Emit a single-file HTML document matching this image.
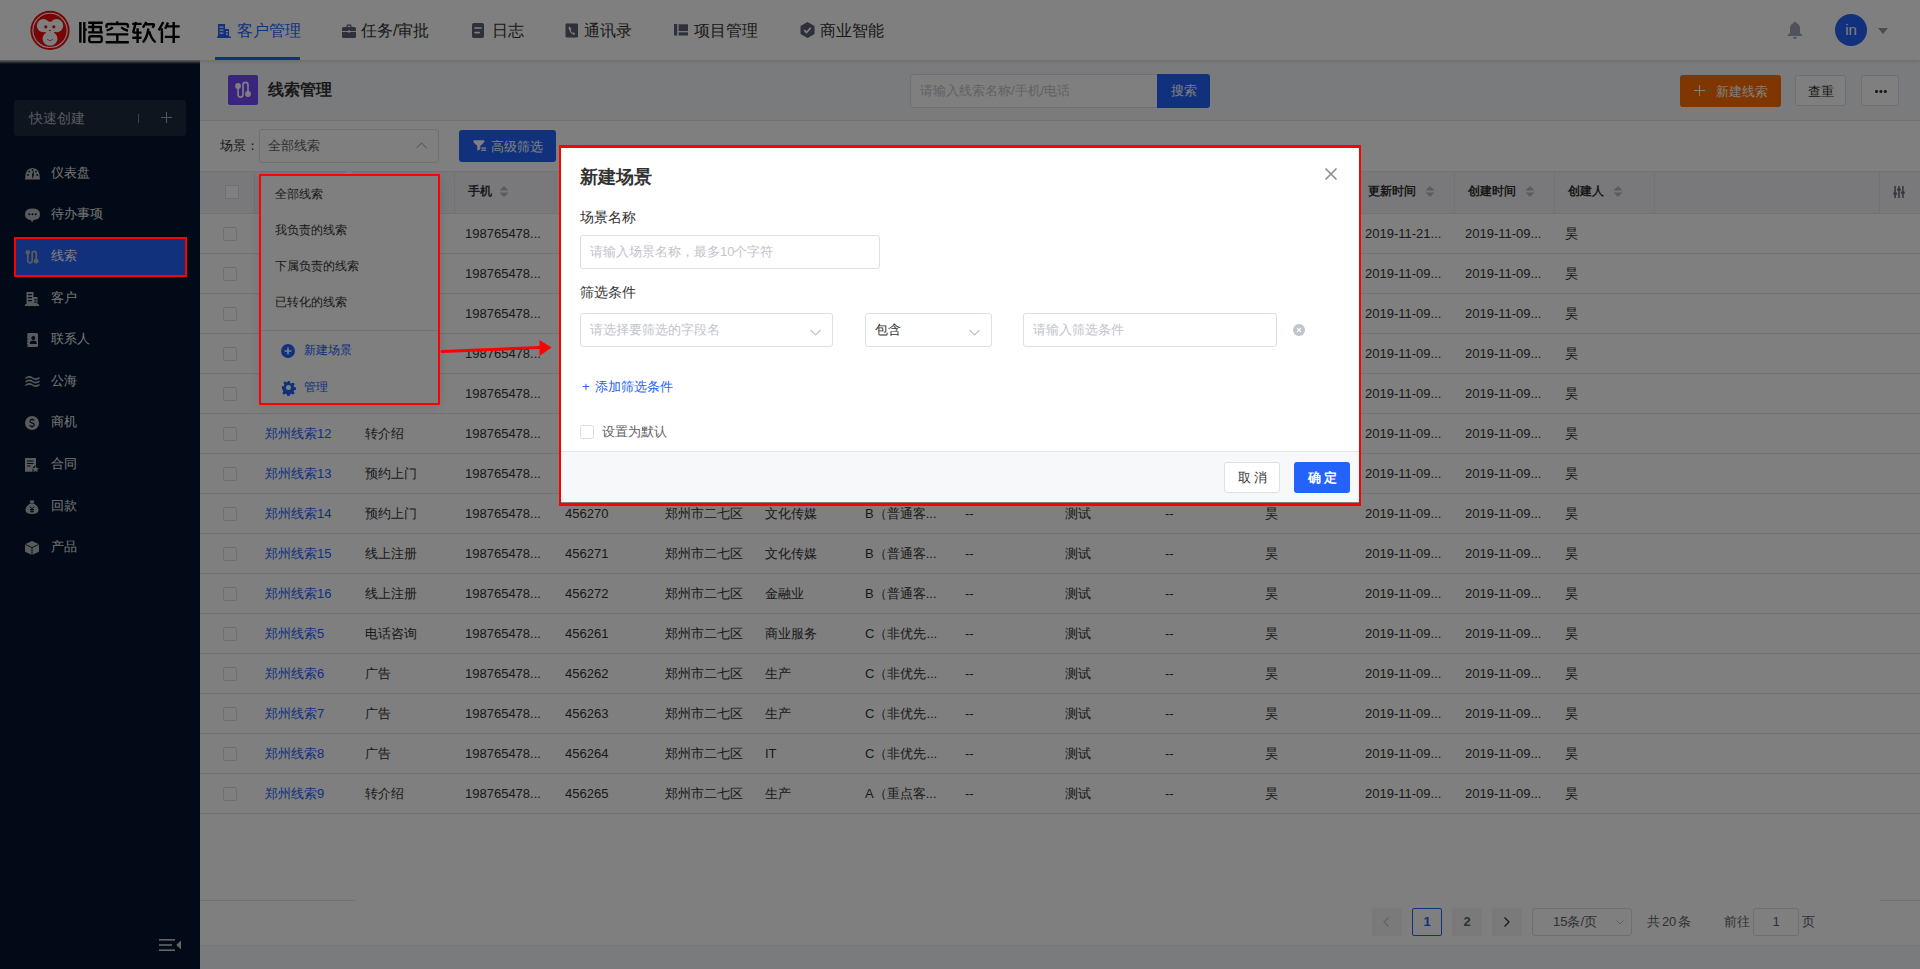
<!DOCTYPE html>
<html><head><meta charset="utf-8">
<style>
*{box-sizing:border-box;margin:0;padding:0}
html,body{width:1920px;height:969px;overflow:hidden;font-family:"Liberation Sans",sans-serif;color:#333;background:#f5f6f9;position:relative}
.abs{position:absolute}
svg{position:absolute;overflow:visible}
.hd{position:absolute;left:0;top:0;width:1920px;height:60px;background:#fff;box-shadow:0 1px 4px rgba(0,0,0,.15);z-index:3}
.nav{position:absolute;top:1px;height:60px;font-size:16px;line-height:60px;color:#333;white-space:nowrap}
.side{position:absolute;left:0;top:60px;width:200px;height:909px;background:#03152c;z-index:2}
.mi{position:absolute;left:51px;font-size:13px;color:#e6e8eb;line-height:20px;white-space:nowrap}
.content{position:absolute;left:200px;top:60px;width:1720px;height:909px;background:#f5f6f9}
.row{position:absolute;left:200px;width:1720px;height:40px;background:#fff;border-bottom:1px solid #e6e6e6;font-size:13px;line-height:40px;color:#333}
.c{position:absolute;top:0;white-space:nowrap}
.lk{color:#2362fb}
.cb{position:absolute;width:14px;height:14px;border:1px solid #dcdfe6;border-radius:2px;background:#fff}
.th{position:absolute;top:-2px;font-size:12px;font-weight:bold;color:#333;line-height:42px;white-space:nowrap}
.vd{position:absolute;top:0;width:1px;height:42px;background:#e6e6e6}
.mask{position:absolute;left:0;top:0;width:1920px;height:969px;background:rgba(0,0,0,.5);z-index:10}
.modal{position:absolute;left:561px;top:148px;width:798px;height:354px;background:#fff;z-index:20}
.red{position:absolute;border:2px solid #ff0000;z-index:30}
.inp{position:absolute;border:1px solid #dcdfe6;border-radius:3px;background:#fff;font-size:13px;color:#c0c4cc;line-height:32px;padding-left:9px;white-space:nowrap}
.btn{position:absolute;border-radius:3px;font-size:13px;text-align:center;white-space:nowrap}
.dd{position:absolute;left:12px;font-size:12px;color:#333;line-height:20px;white-space:nowrap}
.pg{position:absolute;top:908px;height:28px;background:#f4f4f5;border-radius:2px;font-size:13px;font-weight:bold;color:#606266;text-align:center;line-height:28px}
</style></head><body>

<!-- ============ HEADER ============ -->
<div class="hd">
  <svg style="left:29px;top:10px" width="42" height="42" viewBox="0 0 42 42">
    <circle cx="21" cy="20.4" r="19.6" fill="#ee0c0c"/>
    <circle cx="21" cy="20.4" r="17.1" fill="none" stroke="#fff" stroke-width="1.1"/>
    <circle cx="14.4" cy="15.6" r="6.6" fill="#fff"/>
    <circle cx="27.6" cy="15.6" r="6.6" fill="#fff"/>
    <ellipse cx="21" cy="18" rx="6" ry="6.5" fill="#fff"/>
    <ellipse cx="21" cy="28.8" rx="7.5" ry="7" fill="#fff"/>
    <circle cx="16.8" cy="16.8" r="1.6" fill="#ee0c0c"/>
    <circle cx="24.8" cy="16.8" r="1.6" fill="#ee0c0c"/>
    <ellipse cx="20.9" cy="20.4" rx="0.9" ry="0.6" fill="#ee0c0c"/>
    <path d="M18.2 29.3 Q21 32.2 24 29.3" fill="none" stroke="#ee0c0c" stroke-width="0.7"/>
  </svg>
  <svg style="left:0;top:0" width="200" height="60" viewBox="0 0 200 60"><g fill="none" stroke="#000" stroke-width="2.4" stroke-linecap="butt" stroke-linejoin="round">
<path d="M80.35 22V42.8M84.3 22V43M84.3 29.6H86.8"/>
<path d="M88.2 22.8H102.8M93 22.8V32.4M88.2 27H100.8V32.4M88.2 32.4H102.8"/>
<rect x="89.3" y="36.3" width="12.4" height="5.8" rx="1.8"/>
<path d="M116.2 22.5H118.4"/>
<path d="M106.5 27.8V26.2Q106.5 24 108.7 24H125.8Q128 24 128 26.2V27.8"/>
<path d="M112.8 27.3Q110.5 29.8 106.6 30.4M121.2 27.3Q123.5 29.8 128 30.7"/>
<path d="M106.5 34.4H128.3M117.3 34.4V42.3M105.7 42.3H128.8"/>
<path d="M132.3 23.9H141.6M136 22L133.4 31.6Q133.2 32.6 134.2 32.6H141.6M137.6 28.2V43M132.3 37.8H141.6"/>
<path d="M146.3 22L142.9 27.6M146 24.2H152.8Q154.6 24.2 153.8 25.6L152.5 27.9M148.4 28.5Q147.3 37.5 142.9 42.4M149.2 31.2Q151 38.5 155.6 42.4"/>
<path d="M163.3 22L158.7 30.4M161.9 28.2V43M168 22.6L165.2 28.8M167 26.4H179.7M164.8 36.9H179.7M173.7 22V43"/>
</g></svg>

  <!-- nav -->
  <svg style="left:217px;top:24px" width="14" height="14" viewBox="0 0 14 14"><path d="M1 0h7v13h-7z M8 5h4v8h-4z M0 12.5h14v1.5h-14z" fill="#2362fb"/><path d="M2.5 2.5h4v1.2h-4zM2.5 5.5h4v1.2h-4zM2.5 8.5h4v1.2h-4zM9 7h2v1.2h-2zM9 9.5h2v1.2h-2z" fill="#fff"/></svg>
  <div class="nav" style="left:237px;color:#2362fb">客户管理</div>
  <div class="abs" style="left:215px;top:57px;width:85px;height:3px;background:#2362fb"></div>

  <svg style="left:342px;top:24px" width="14" height="14" viewBox="0 0 14 14"><path d="M4.5 3V1.5Q4.5 0.5 5.5 0.5h3Q9.5 0.5 9.5 1.5V3h-1.2V1.7h-2.6V3z" fill="#5c6075"/><rect x="0" y="3" width="14" height="11" rx="1.5" fill="#5c6075"/><rect x="0" y="7" width="14" height="0.9" fill="#fff"/><circle cx="7" cy="7.5" r="1.2" fill="#fff"/></svg>
  <div class="nav" style="left:361px">任务/审批</div>

  <svg style="left:472px;top:23px" width="12" height="15" viewBox="0 0 12 15"><rect x="0" y="0" width="12" height="15" rx="1.8" fill="#5c6075"/><rect x="2.2" y="4.2" width="7.8" height="1.6" rx=".8" fill="#fff"/><rect x="2.2" y="8.8" width="5.8" height="1.6" rx=".8" fill="#fff"/></svg>
  <div class="nav" style="left:492px">日志</div>

  <svg style="left:565px;top:23px" width="13" height="15" viewBox="0 0 13 15"><rect x="0.5" y="0.5" width="12.5" height="14" rx="1.2" fill="#5c6075"/><path d="M4.2 3.2Q3.2 4 3.8 6.2Q5 10 8.6 11.8Q9.6 12 10.2 11l-1.6-1.8-1.2.8Q6 8.8 5.6 6.6l1-.8z" fill="#fff"/></svg>
  <div class="nav" style="left:584px">通讯录</div>

  <svg style="left:674px;top:24px" width="14" height="12" viewBox="0 0 14 12"><rect x="0" y="0" width="3.2" height="11.5" fill="#5c6075"/><rect x="4.6" y="0.3" width="9.4" height="6.8" fill="#5c6075"/><rect x="4.6" y="8.3" width="9.4" height="3.2" fill="#5c6075"/></svg>
  <div class="nav" style="left:694px">项目管理</div>

  <svg style="left:800px;top:22px" width="15" height="16" viewBox="0 0 15 16"><path d="M7.5 0L14.5 4v8L7.5 16L0.5 12V4z" fill="#5c6075"/><path d="M4.2 8.2l2.3 2.3 4.2-4.6" fill="none" stroke="#fff" stroke-width="1.8"/></svg>
  <div class="nav" style="left:820px">商业智能</div>

  <!-- bell -->
  <svg style="left:1787px;top:21px" width="16" height="18" viewBox="0 0 16 18"><path d="M8 0.5Q9.3 0.5 9.4 2Q13 3 13 7.5V12l2.5 2.5v0.5H0.5v-0.5L3 12V7.5Q3 3 6.6 2Q6.7 0.5 8 0.5z" fill="#9ea6ba"/><path d="M6 16h4Q9.8 18 8 18Q6.2 18 6 16z" fill="#9ea6ba"/></svg>
  <div class="abs" style="left:1835px;top:14px;width:32px;height:32px;border-radius:50%;background:#2362fb;color:#fff;font-size:15px;line-height:32px;text-align:center">in</div>
  <svg style="left:1878px;top:28px" width="10" height="7" viewBox="0 0 10 7"><path d="M0 0h10L5 6z" fill="#999"/></svg>
</div>

<!-- ============ SIDEBAR ============ -->
<div class="side">
  <div class="abs" style="left:0;top:0;width:200px;height:4px;background:linear-gradient(rgba(235,236,240,.9),rgba(3,21,44,0))"></div>
  <div class="abs" style="left:14px;top:40px;width:172px;height:36px;border-radius:3px;background:#1c2a3e"></div>
  <div class="abs" style="left:29px;top:48px;font-size:14px;line-height:20px;color:#b0b4bb">快速创建</div>
  <div class="abs" style="left:138px;top:54px;width:1px;height:9px;background:#7a8290"></div>
  <div class="abs" style="left:160.5px;top:57px;width:11px;height:1px;background:#a8adb5"></div>
  <div class="abs" style="left:165.5px;top:52px;width:1px;height:11px;background:#a8adb5"></div>
  <div class="abs" style="left:14px;top:178px;width:172px;height:38px;border-radius:3px;background:#2362fb"></div>
  <svg style="left:25px;top:108px" width="15" height="12" viewBox="0 0 15 12"><path d="M0 11.5Q0 0 7.5 0Q15 0 15 11.5z" fill="#b4b6ba"/><path d="M7.5 11L7 6.5L8.5 2.5L9 7z" fill="#03152c"/><circle cx="3" cy="7" r="0.9" fill="#03152c"/><circle cx="4.2" cy="3.6" r="0.9" fill="#03152c"/><circle cx="7.5" cy="2" r="0.9" fill="#03152c"/><circle cx="11" cy="3.6" r="0.9" fill="#03152c"/><circle cx="12.2" cy="7" r="0.9" fill="#03152c"/></svg>
<svg style="left:25px;top:148px" width="15" height="15" viewBox="0 0 15 15"><path d="M7.5 0.5Q15 0.5 15 6.3Q15 12 8.5 12L7 14.5L5.8 12Q0 11.5 0 6.3Q0 0.5 7.5 0.5z" fill="#b4b6ba"/><circle cx="4.3" cy="6.3" r="1" fill="#03152c"/><circle cx="7.5" cy="6.3" r="1" fill="#03152c"/><circle cx="10.7" cy="6.3" r="1" fill="#03152c"/></svg>
<svg style="left:25px;top:190px" width="14" height="14" viewBox="0 0 14 14"><path d="M2.8 2.5V10.5Q2.8 12.8 5 12.8Q7.2 12.8 7.2 10.5V3.5Q7.2 1.3 9.2 1.3Q11.2 1.3 11.2 3.5V10" fill="none" stroke="#b4b6ba" stroke-width="1.7"/><circle cx="2.8" cy="2.3" r="2.3" fill="#b4b6ba"/><circle cx="11.2" cy="11.2" r="2.4" fill="#b4b6ba"/></svg>
<svg style="left:25px;top:232px" width="14" height="14" viewBox="0 0 14 14"><path d="M1.5 0h7v12.5h-7z M8.5 5h4v7.5h-4z M0 12.2h14v1.8h-14z" fill="#b4b6ba"/><path d="M3 2h4v1.3h-4zM3 5h4v1.3h-4zM3 8h4v1.3h-4zM9.3 7h2.4v1.2h-2.4zM9.3 9.5h2.4v1.2h-2.4z" fill="#03152c"/></svg>
<svg style="left:26px;top:273px" width="12" height="14" viewBox="0 0 12 14"><rect x="1" y="0" width="11" height="14" rx="1.5" fill="#b4b6ba"/><path d="M0 3h2.2M0 6h2.2M0 9h2.2M0 12h2.2" stroke="#03152c" stroke-width="0.9"/><circle cx="7.3" cy="5" r="2" fill="#03152c"/><path d="M3.8 11Q3.8 7.6 7.3 7.6Q10.8 7.6 10.8 11z" fill="#03152c"/></svg>
<svg style="left:25px;top:316px" width="15" height="11" viewBox="0 0 15 11"><path d="M0.5 2.5Q4 -0.5 7.5 2Q11 4.5 14.5 1.5M0.5 6Q4 3 7.5 5.5Q11 8 14.5 5M0.5 9.5Q4 6.5 7.5 9Q11 11.5 14.5 8.5" fill="none" stroke="#b4b6ba" stroke-width="1.5"/></svg>
<svg style="left:25px;top:356px" width="14" height="14" viewBox="0 0 14 14"><circle cx="7" cy="7" r="7" fill="#b4b6ba"/><path d="M9.2 4.6Q8.8 3.6 7 3.6Q4.9 3.6 4.9 5.2Q4.9 6.5 7 6.9Q9.3 7.3 9.3 8.8Q9.3 10.4 7 10.4Q5 10.4 4.7 9.2M7 2.3v1.3M7 10.4v1.3" fill="none" stroke="#03152c" stroke-width="1.1"/></svg>
<svg style="left:25px;top:398px" width="14" height="14" viewBox="0 0 14 14"><path d="M0 0h11v7.5Q7 8 7.5 13.8H0z" fill="#b4b6ba"/><path d="M2 3h6.5M2 5.5h6.5M2 8h3.5" stroke="#03152c" stroke-width="1"/><path d="M10.5 7.8l1.1 2.2 2.4.3-1.8 1.6.5 2.3-2.2-1.2-2.1 1.2.4-2.3-1.7-1.6 2.4-.3z" fill="#b4b6ba"/></svg>
<svg style="left:25px;top:440px" width="14" height="14" viewBox="0 0 14 14"><path d="M4.5 0.5h5L8.3 3.3h-2.6z" fill="#b4b6ba"/><path d="M5 3.6h4Q13.5 6.5 13.5 10Q13.5 14 7 14Q0.5 14 0.5 10Q0.5 6.5 5 3.6z" fill="#b4b6ba"/><path d="M5 6.5L7 8.8L9 6.5M7 8.8v4M5 9.5h4M5 11.3h4" fill="none" stroke="#03152c" stroke-width="1"/></svg>
<svg style="left:25px;top:481px" width="14" height="14" viewBox="0 0 14 14"><path d="M7 0L14 3.2V10.8L7 14L0 10.8V3.2z" fill="#b4b6ba"/><path d="M0.3 3.4L7 6.6L13.7 3.4M7 6.6V13.8" fill="none" stroke="#03152c" stroke-width="0.9"/></svg>

</div>
<div class="mi" style="top:163px;z-index:3">仪表盘</div>
<div class="mi" style="top:204px;z-index:3">待办事项</div>
<div class="mi" style="top:246px;z-index:3;color:#fff">线索</div>
<div class="mi" style="top:288px;z-index:3">客户</div>
<div class="mi" style="top:329px;z-index:3">联系人</div>
<div class="mi" style="top:371px;z-index:3">公海</div>
<div class="mi" style="top:412px;z-index:3">商机</div>
<div class="mi" style="top:454px;z-index:3">合同</div>
<div class="mi" style="top:496px;z-index:3">回款</div>
<div class="mi" style="top:537px;z-index:3">产品</div>

<!-- ============ CONTENT ============ -->
<div class="content"></div>
<div class="abs" style="left:200px;top:120px;width:1720px;height:1px;background:#e6e6e6"></div>
<div class="abs" style="left:200px;top:121px;width:1720px;height:50px;background:#fff"></div>
<!-- title -->
<div class="abs" style="left:228px;top:75px;width:30px;height:30px;border-radius:2px;background:#7349fc"></div>
<svg style="left:234px;top:82px" width="18" height="17" viewBox="0 0 18 17"><path d="M4.05 3.9V12.8A2.48 2.48 0 0 0 9 12.8V2.9A2.5 2.5 0 0 1 14 2.9V12" fill="none" stroke="#fff" stroke-width="1.7"/><circle cx="4.05" cy="3.9" r="2.9" fill="#fff"/><circle cx="14" cy="12" r="2.9" fill="#fff"/></svg>
<div class="abs" style="left:268px;top:80px;font-size:16px;line-height:20px;font-weight:bold;color:#333">线索管理</div>
<div class="inp" style="left:910px;top:74px;width:248px;height:34px;border-radius:3px 0 0 3px">请输入线索名称/手机/电话</div>
<div class="btn" style="left:1157px;top:74px;width:53px;height:34px;background:#2362fb;color:#fff;line-height:34px;border-radius:0 3px 3px 0">搜索</div>
<div class="btn" style="left:1680px;top:75px;width:101px;height:32px;background:#ff6c00;color:#fff;line-height:32px"></div>
<div class="abs" style="left:1694px;top:90px;width:11px;height:1.2px;background:#fff"></div>
<div class="abs" style="left:1699px;top:85px;width:1.2px;height:11px;background:#fff"></div>
<div class="abs" style="left:1716px;top:82px;font-size:13px;line-height:20px;color:#fff">新建线索</div>
<div class="btn" style="left:1795px;top:75px;width:51px;height:31px;background:#fff;border:1px solid #dcdfe6;color:#333;line-height:31px">查重</div>
<div class="btn" style="left:1861px;top:75px;width:38px;height:31px;background:#fff;border:1px solid #dcdfe6;color:#333;line-height:29px"></div>
<div class="abs" style="left:1875px;top:90px;width:2.6px;height:2.6px;border-radius:50%;background:#333;box-shadow:4.4px 0 0 #333,8.8px 0 0 #333"></div>

<!-- filter row -->
<div class="abs" style="left:220px;top:136px;font-size:13px;line-height:20px;color:#333">场景：</div>
<div class="inp" style="left:259px;top:129px;width:180px;height:34px;color:#606266;padding-left:8px">全部线索</div>
<svg style="left:416px;top:142px" width="11" height="7" viewBox="0 0 11 7"><path d="M0.5 6L5.5 1L10.5 6" fill="none" stroke="#c0c4cc" stroke-width="1.2"/></svg>
<div class="btn" style="left:459px;top:130px;width:97px;height:32px;background:#2362fb;color:#fff"></div>
<svg style="left:473px;top:140px" width="14" height="12" viewBox="0 0 14 12"><path d="M0.3 1.3Q0.3 0.3 1.5 0.3H10.3Q11.5 0.3 11.5 1.3Q11 3 7.3 5.8V9.3L4.3 10.8V5.8Q0.6 3 0.3 1.3z" fill="#fff"/><rect x="8.3" y="7.4" width="4.8" height="1.3" fill="#fff"/><rect x="8.3" y="9.6" width="4.8" height="1.3" fill="#fff"/></svg>
<div class="abs" style="left:491px;top:137px;font-size:13px;line-height:20px;color:#fff">高级筛选</div>

<!-- table header -->
<div class="abs" style="left:200px;top:171px;width:1720px;height:43px;background:#f2f3f6;border-top:1px solid #e6e6e6;border-bottom:1px solid #e6e6e6">
  <div class="cb" style="left:25px;top:13px"></div>
  <div class="vd" style="left:54px"></div>
  <div class="vd" style="left:154px"></div>
  <div class="vd" style="left:254px"></div>
  <div class="th" style="left:268px">手机</div>
  <svg style="left:299px;top:14px" width="10" height="11" viewBox="0 0 10 11"><path d="M0.5 4.5L5 0L9.5 4.5z M0.5 6.5L5 11L9.5 6.5z" fill="#b4b8c0"/></svg>
  <div class="vd" style="left:354px"></div>
  <div class="vd" style="left:1254px"></div>
  <div class="th" style="left:1168px">更新时间</div>
  <svg style="left:1225px;top:14px" width="10" height="11" viewBox="0 0 10 11"><path d="M0.5 4.5L5 0L9.5 4.5z M0.5 6.5L5 11L9.5 6.5z" fill="#b4b8c0"/></svg>
  <div class="th" style="left:1268px">创建时间</div>
  <svg style="left:1325px;top:14px" width="10" height="11" viewBox="0 0 10 11"><path d="M0.5 4.5L5 0L9.5 4.5z M0.5 6.5L5 11L9.5 6.5z" fill="#b4b8c0"/></svg>
  <div class="vd" style="left:1354px"></div>
  <div class="th" style="left:1368px">创建人</div>
  <svg style="left:1413px;top:14px" width="10" height="11" viewBox="0 0 10 11"><path d="M0.5 4.5L5 0L9.5 4.5z M0.5 6.5L5 11L9.5 6.5z" fill="#b4b8c0"/></svg>
  <div class="vd" style="left:1454px"></div>
  <div class="vd" style="left:1679px"></div>
  <svg style="left:1692.5px;top:14px" width="12" height="12" viewBox="0 0 12 12"><rect x="1.3" y="0" width="1.6" height="12" fill="#6a7186"/><rect x="5.2" y="0" width="1.6" height="12" fill="#6a7186"/><rect x="9.1" y="0" width="1.6" height="12" fill="#6a7186"/><ellipse cx="2.1" cy="7.5" rx="2" ry="1.5" fill="#6a7186"/><ellipse cx="6" cy="3.6" rx="2" ry="1.5" fill="#6a7186"/><ellipse cx="9.9" cy="6.5" rx="2" ry="1.5" fill="#6a7186"/></svg>
</div>

<div class="row" style="top:214px"><div class="cb" style="left:23px;top:13px"></div><span class="c" style="left:265px">198765478...</span><span class="c" style="left:1165px">2019-11-21...</span><span class="c" style="left:1265px">2019-11-09...</span><span class="c" style="left:1365px">昊</span></div>
<div class="row" style="top:254px"><div class="cb" style="left:23px;top:13px"></div><span class="c" style="left:265px">198765478...</span><span class="c" style="left:1165px">2019-11-09...</span><span class="c" style="left:1265px">2019-11-09...</span><span class="c" style="left:1365px">昊</span></div>
<div class="row" style="top:294px"><div class="cb" style="left:23px;top:13px"></div><span class="c" style="left:265px">198765478...</span><span class="c" style="left:1165px">2019-11-09...</span><span class="c" style="left:1265px">2019-11-09...</span><span class="c" style="left:1365px">昊</span></div>
<div class="row" style="top:334px"><div class="cb" style="left:23px;top:13px"></div><span class="c" style="left:265px">198765478...</span><span class="c" style="left:1165px">2019-11-09...</span><span class="c" style="left:1265px">2019-11-09...</span><span class="c" style="left:1365px">昊</span></div>
<div class="row" style="top:374px"><div class="cb" style="left:23px;top:13px"></div><span class="c" style="left:265px">198765478...</span><span class="c" style="left:1165px">2019-11-09...</span><span class="c" style="left:1265px">2019-11-09...</span><span class="c" style="left:1365px">昊</span></div>
<div class="row" style="top:414px"><div class="cb" style="left:23px;top:13px"></div><span class="c lk" style="left:65px">郑州线索12</span><span class="c" style="left:165px">转介绍</span><span class="c" style="left:265px">198765478...</span><span class="c" style="left:1165px">2019-11-09...</span><span class="c" style="left:1265px">2019-11-09...</span><span class="c" style="left:1365px">昊</span></div>
<div class="row" style="top:454px"><div class="cb" style="left:23px;top:13px"></div><span class="c lk" style="left:65px">郑州线索13</span><span class="c" style="left:165px">预约上门</span><span class="c" style="left:265px">198765478...</span><span class="c" style="left:1165px">2019-11-09...</span><span class="c" style="left:1265px">2019-11-09...</span><span class="c" style="left:1365px">昊</span></div>
<div class="row" style="top:494px"><div class="cb" style="left:23px;top:13px"></div><span class="c lk" style="left:65px">郑州线索14</span><span class="c" style="left:165px">预约上门</span><span class="c" style="left:265px">198765478...</span><span class="c" style="left:365px">456270</span><span class="c" style="left:465px">郑州市二七区</span><span class="c" style="left:565px">文化传媒</span><span class="c" style="left:665px">B（普通客...</span><span class="c" style="left:765px">--</span><span class="c" style="left:865px">测试</span><span class="c" style="left:965px">--</span><span class="c" style="left:1065px">昊</span><span class="c" style="left:1165px">2019-11-09...</span><span class="c" style="left:1265px">2019-11-09...</span><span class="c" style="left:1365px">昊</span></div>
<div class="row" style="top:534px"><div class="cb" style="left:23px;top:13px"></div><span class="c lk" style="left:65px">郑州线索15</span><span class="c" style="left:165px">线上注册</span><span class="c" style="left:265px">198765478...</span><span class="c" style="left:365px">456271</span><span class="c" style="left:465px">郑州市二七区</span><span class="c" style="left:565px">文化传媒</span><span class="c" style="left:665px">B（普通客...</span><span class="c" style="left:765px">--</span><span class="c" style="left:865px">测试</span><span class="c" style="left:965px">--</span><span class="c" style="left:1065px">昊</span><span class="c" style="left:1165px">2019-11-09...</span><span class="c" style="left:1265px">2019-11-09...</span><span class="c" style="left:1365px">昊</span></div>
<div class="row" style="top:574px"><div class="cb" style="left:23px;top:13px"></div><span class="c lk" style="left:65px">郑州线索16</span><span class="c" style="left:165px">线上注册</span><span class="c" style="left:265px">198765478...</span><span class="c" style="left:365px">456272</span><span class="c" style="left:465px">郑州市二七区</span><span class="c" style="left:565px">金融业</span><span class="c" style="left:665px">B（普通客...</span><span class="c" style="left:765px">--</span><span class="c" style="left:865px">测试</span><span class="c" style="left:965px">--</span><span class="c" style="left:1065px">昊</span><span class="c" style="left:1165px">2019-11-09...</span><span class="c" style="left:1265px">2019-11-09...</span><span class="c" style="left:1365px">昊</span></div>
<div class="row" style="top:614px"><div class="cb" style="left:23px;top:13px"></div><span class="c lk" style="left:65px">郑州线索5</span><span class="c" style="left:165px">电话咨询</span><span class="c" style="left:265px">198765478...</span><span class="c" style="left:365px">456261</span><span class="c" style="left:465px">郑州市二七区</span><span class="c" style="left:565px">商业服务</span><span class="c" style="left:665px">C（非优先...</span><span class="c" style="left:765px">--</span><span class="c" style="left:865px">测试</span><span class="c" style="left:965px">--</span><span class="c" style="left:1065px">昊</span><span class="c" style="left:1165px">2019-11-09...</span><span class="c" style="left:1265px">2019-11-09...</span><span class="c" style="left:1365px">昊</span></div>
<div class="row" style="top:654px"><div class="cb" style="left:23px;top:13px"></div><span class="c lk" style="left:65px">郑州线索6</span><span class="c" style="left:165px">广告</span><span class="c" style="left:265px">198765478...</span><span class="c" style="left:365px">456262</span><span class="c" style="left:465px">郑州市二七区</span><span class="c" style="left:565px">生产</span><span class="c" style="left:665px">C（非优先...</span><span class="c" style="left:765px">--</span><span class="c" style="left:865px">测试</span><span class="c" style="left:965px">--</span><span class="c" style="left:1065px">昊</span><span class="c" style="left:1165px">2019-11-09...</span><span class="c" style="left:1265px">2019-11-09...</span><span class="c" style="left:1365px">昊</span></div>
<div class="row" style="top:694px"><div class="cb" style="left:23px;top:13px"></div><span class="c lk" style="left:65px">郑州线索7</span><span class="c" style="left:165px">广告</span><span class="c" style="left:265px">198765478...</span><span class="c" style="left:365px">456263</span><span class="c" style="left:465px">郑州市二七区</span><span class="c" style="left:565px">生产</span><span class="c" style="left:665px">C（非优先...</span><span class="c" style="left:765px">--</span><span class="c" style="left:865px">测试</span><span class="c" style="left:965px">--</span><span class="c" style="left:1065px">昊</span><span class="c" style="left:1165px">2019-11-09...</span><span class="c" style="left:1265px">2019-11-09...</span><span class="c" style="left:1365px">昊</span></div>
<div class="row" style="top:734px"><div class="cb" style="left:23px;top:13px"></div><span class="c lk" style="left:65px">郑州线索8</span><span class="c" style="left:165px">广告</span><span class="c" style="left:265px">198765478...</span><span class="c" style="left:365px">456264</span><span class="c" style="left:465px">郑州市二七区</span><span class="c" style="left:565px">IT</span><span class="c" style="left:665px">C（非优先...</span><span class="c" style="left:765px">--</span><span class="c" style="left:865px">测试</span><span class="c" style="left:965px">--</span><span class="c" style="left:1065px">昊</span><span class="c" style="left:1165px">2019-11-09...</span><span class="c" style="left:1265px">2019-11-09...</span><span class="c" style="left:1365px">昊</span></div>
<div class="row" style="top:774px"><div class="cb" style="left:23px;top:13px"></div><span class="c lk" style="left:65px">郑州线索9</span><span class="c" style="left:165px">转介绍</span><span class="c" style="left:265px">198765478...</span><span class="c" style="left:365px">456265</span><span class="c" style="left:465px">郑州市二七区</span><span class="c" style="left:565px">生产</span><span class="c" style="left:665px">A（重点客...</span><span class="c" style="left:765px">--</span><span class="c" style="left:865px">测试</span><span class="c" style="left:965px">--</span><span class="c" style="left:1065px">昊</span><span class="c" style="left:1165px">2019-11-09...</span><span class="c" style="left:1265px">2019-11-09...</span><span class="c" style="left:1365px">昊</span></div>

<!-- bottom / pagination -->
<div class="abs" style="left:200px;top:814px;width:1720px;height:131px;background:#fff"></div>
<div class="abs" style="left:200px;top:945px;width:1720px;height:1px;background:#e8e8ea"></div>
<div class="abs" style="left:200px;top:900px;width:155px;height:1px;background:#e4e7ed"></div>
<div class="abs" style="left:1880px;top:900px;width:40px;height:1px;background:#e4e7ed"></div>
<div class="pg" style="left:1372px;width:30px"></div><svg style="left:1383px;top:917px" width="6" height="10" viewBox="0 0 6 10"><path d="M5.5 0.5L1 5L5.5 9.5" fill="none" stroke="#c0c4cc" stroke-width="1.3"/></svg>
<div class="pg" style="left:1412px;width:30px;background:#fff;border:1px solid #2362fb;color:#2362fb;line-height:26px">1</div>
<div class="pg" style="left:1452px;width:30px">2</div>
<div class="pg" style="left:1492px;width:30px"></div><svg style="left:1504px;top:917px" width="6" height="10" viewBox="0 0 6 10"><path d="M0.5 0.5L5 5L0.5 9.5" fill="none" stroke="#303133" stroke-width="1.3"/></svg>
<div class="inp" style="left:1532px;top:908px;width:100px;height:28px;line-height:26px;color:#606266;padding-left:20px">15条/页</div><svg style="left:1616px;top:920px" width="8" height="5" viewBox="0 0 8 5"><path d="M0.5 0.5L4 4L7.5 0.5" fill="none" stroke="#c0c4cc" stroke-width="1"/></svg>
<div class="abs" style="left:1647px;top:912px;font-size:13px;line-height:20px;color:#606266;word-spacing:-1px;letter-spacing:-0.3px">共 20 条</div>
<div class="abs" style="left:1724px;top:912px;font-size:13px;line-height:20px;color:#606266">前往</div>
<div class="inp" style="left:1753px;top:908px;width:46px;height:28px;line-height:26px;color:#606266;padding-left:0;text-align:center">1</div>
<div class="abs" style="left:1802px;top:912px;font-size:13px;line-height:20px;color:#606266">页</div>

<!-- scene dropdown (under mask) -->
<svg style="left:343px;top:169px;z-index:6" width="12" height="7" viewBox="0 0 12 7"><path d="M0 6.5L6 0.5L12 6.5z" fill="#fff" stroke="#ebeef5" stroke-width="1"/></svg>
<div class="abs" style="left:259px;top:175px;width:181px;height:230px;background:#fff;box-shadow:0 2px 12px rgba(0,0,0,.1);z-index:5">
  <div class="dd" style="left:16px;top:9px">全部线索</div>
  <div class="dd" style="left:16px;top:45px">我负责的线索</div>
  <div class="dd" style="left:16px;top:81px">下属负责的线索</div>
  <div class="dd" style="left:16px;top:117px">已转化的线索</div>
  <div class="abs" style="left:0;top:155px;width:181px;height:1px;background:#e6e6e6"></div>
  <svg style="left:22px;top:169px" width="14" height="14" viewBox="0 0 14 14"><circle cx="7" cy="7" r="7" fill="#2362fb"/><path d="M3.6 7h6.8M7 3.6v6.8" stroke="#fff" stroke-width="1.5"/></svg>
  <div class="dd" style="left:45px;top:165px;color:#2362fb">新建场景</div>
  <svg style="left:22.5px;top:206px" width="13" height="13" viewBox="0 0 13 13"><path d="M5.3 0h2.4l.4 1.9 1.3.6 1.6-1.1 1.7 1.7-1.1 1.6.6 1.3 1.8.4v2.4l-1.8.4-.6 1.3 1.1 1.6-1.7 1.7-1.6-1.1-1.3.6-.4 1.8H5.3l-.4-1.8-1.3-.6-1.6 1.1-1.7-1.7 1.1-1.6-.6-1.3L0 7.7V5.3l1.8-.4.6-1.3-1.1-1.6L3 .3l1.6 1.1 1.3-.6z" fill="#2362fb"/><circle cx="6.5" cy="6.5" r="2.5" fill="#fff"/></svg>
  <div class="dd" style="left:45px;top:202px;color:#2362fb">管理</div>
</div>

<!-- sidebar collapse -->
<svg style="left:159px;top:939px;z-index:3" width="22" height="12" viewBox="0 0 22 12"><rect x="0" y="0" width="16" height="1.6" fill="#c8cbd0"/><rect x="0" y="5.2" width="13" height="1.6" fill="#c8cbd0"/><rect x="0" y="10.4" width="16" height="1.6" fill="#c8cbd0"/><path d="M22 1.5v9L17.3 6z" fill="#c8cbd0"/></svg>

<div class="mask"></div>

<!-- ============ MODAL ============ -->
<div class="modal">
</div>
<div class="abs" style="left:580px;top:167px;font-size:18px;line-height:20px;font-weight:bold;color:#333;z-index:21">新建场景</div>
<svg style="left:1325px;top:168px;z-index:21" width="12" height="12" viewBox="0 0 12 12"><path d="M0.5 0.5L11.5 11.5M11.5 0.5L0.5 11.5" stroke="#8a8f99" stroke-width="1.7"/></svg>
<div class="abs" style="left:580px;top:207px;font-size:14px;line-height:20px;color:#333;z-index:21">场景名称</div>
<div class="inp" style="left:580px;top:235px;width:300px;height:34px;z-index:21">请输入场景名称，最多10个字符</div>
<div class="abs" style="left:580px;top:282px;font-size:14px;line-height:20px;color:#333;z-index:21">筛选条件</div>
<div class="inp" style="left:580px;top:313px;width:253px;height:34px;z-index:21">请选择要筛选的字段名</div>
<svg style="left:810px;top:329px;z-index:21" width="11" height="7" viewBox="0 0 11 7"><path d="M0.5 1L5.5 6L10.5 1" fill="none" stroke="#c0c4cc" stroke-width="1.2"/></svg>
<div class="inp" style="left:865px;top:313px;width:127px;height:34px;color:#333;z-index:21">包含</div>
<svg style="left:969px;top:329px;z-index:21" width="11" height="7" viewBox="0 0 11 7"><path d="M0.5 1L5.5 6L10.5 1" fill="none" stroke="#c0c4cc" stroke-width="1.2"/></svg>
<div class="inp" style="left:1023px;top:313px;width:254px;height:34px;z-index:21">请输入筛选条件</div>
<svg style="left:1293px;top:324px;z-index:21" width="12" height="12" viewBox="0 0 12 12"><circle cx="6" cy="6" r="6" fill="#c0c4cc"/><path d="M4 4L8 8M8 4L4 8" stroke="#fff" stroke-width="1.2"/></svg>
<div class="abs" style="left:582px;top:377px;font-size:13px;line-height:20px;color:#2362fb;z-index:21;word-spacing:1.5px">+ 添加筛选条件</div>
<div class="cb" style="left:580px;top:425px;z-index:21"></div>
<div class="abs" style="left:602px;top:422px;font-size:13px;line-height:20px;color:#606266;z-index:21">设置为默认</div>
<div class="abs" style="left:561px;top:451px;width:798px;height:51px;background:#f7f8fa;border-top:1px solid #e6e6e6;z-index:21"></div>
<div class="btn" style="left:1224px;top:462px;width:56px;height:31px;background:#fff;border:1px solid #dcdfe6;color:#333;line-height:29px;z-index:22;letter-spacing:3px;text-indent:3px">取消</div>
<div class="btn" style="left:1294px;top:462px;width:56px;height:31px;background:#2362fb;color:#fff;line-height:31px;z-index:22;letter-spacing:3px;text-indent:3px;font-weight:bold">确定</div>


<!-- annotations -->
<div class="red" style="left:559px;top:145px;width:802px;height:361px;border-width:3px 2px 3px 2px"></div>
<div class="red" style="left:259px;top:174px;width:181px;height:231px"></div>
<div class="red" style="left:14px;top:237px;width:173px;height:40px"></div>
<svg style="left:0;top:0;z-index:30" width="1" height="1"><path d="M442 351.5L540 347.6" stroke="#ff0000" stroke-width="3" stroke-linecap="round"/><path d="M539.5 340L551.5 347.4L539.5 356z" fill="#ff0000"/></svg>
</body></html>
